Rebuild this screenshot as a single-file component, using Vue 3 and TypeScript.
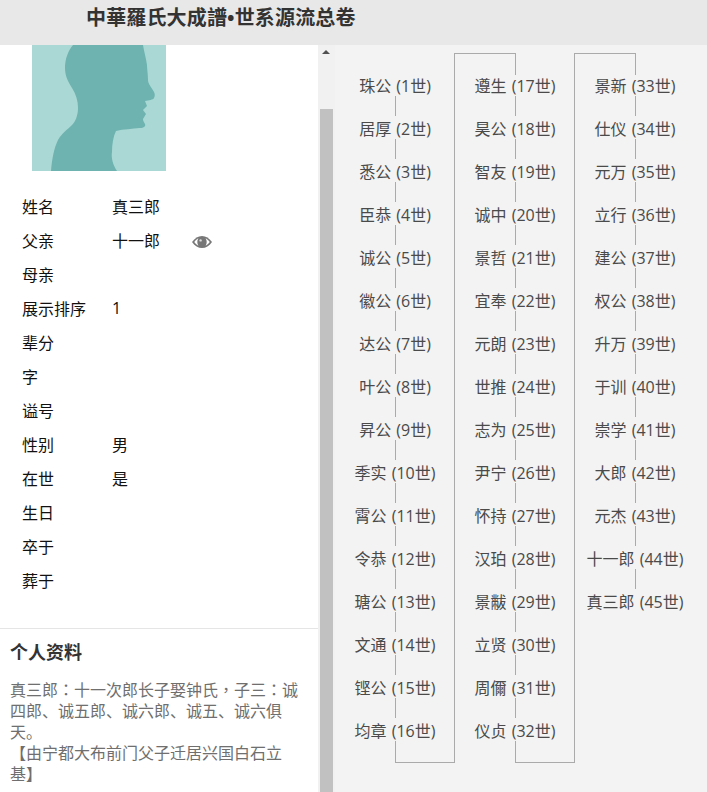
<script setup lang="ts">
interface Field { label: string; value?: string; eye?: boolean }

const fields: Field[] = [
  { label: '姓名', value: '真三郎' },
  { label: '父亲', value: '十一郎', eye: true },
  { label: '母亲' },
  { label: '展示排序', value: '1' },
  { label: '辈分' },
  { label: '字' },
  { label: '谥号' },
  { label: '性别', value: '男' },
  { label: '在世', value: '是' },
  { label: '生日' },
  { label: '卒于' },
  { label: '葬于' },
]

const names = [
  '珠公', '居厚', '悉公', '臣恭', '诚公', '徽公', '达公', '叶公', '昇公', '季实', '霄公', '令恭', '瑭公', '文通', '铿公', '均章',
  '遵生', '昊公', '智友', '诚中', '景哲', '宜奉', '元朗', '世推', '志为', '尹宁', '怀持', '汉珀', '景黻', '立贤', '周儞', '仪贞',
  '景新', '仕仪', '元万', '立行', '建公', '权公', '升万', '于训', '崇学', '大郎', '元杰', '十一郎', '真三郎',
]

const columns = [0, 16, 32].map((start, c) => ({
  index: c,
  items: names.slice(start, start + 16).map((name, i) => ({
    text: `${name} (${start + i + 1}世)`,
  })),
}))
</script>

<template>
  <div class="page">
    <header class="topbar">
      <h1 class="title">中華羅氏大成譜•世系源流总卷</h1>
    </header>
    <div class="body">
      <aside class="side">
        <div class="side-content">
          <svg class="avatar" viewBox="0 0 134 126" width="134" height="126">
            <rect width="134" height="126" fill="#aad9d5" />
            <path
              fill="#6fb3b0"
              d="M41 0C36 6 33 14 33 23C33 32 37 38 40 43C44 49 46 56 46 63C46 71 43 77 40 80C35 85 30 88 26 95C22 103 20 114 19 126H85C81 120 79 113 80 107C80 100 81 92 84 86C92 84 100 84 108 83C112 83 114 81 113 79C112 77 111 76 111 74L114 69L111 65L115 61L113 56C117 55 121 55 122 53C123 51 123 49 122 47C120 43 116 39 116 35C116 28 115 24 115 20C114 13 112 6 111 0Z"
            />
          </svg>
          <dl class="fields">
            <div v-for="f in fields" :key="f.label" class="field">
              <dt class="field-label">{{ f.label }}</dt>
              <dd class="field-value">{{ f.value }}</dd>
              <svg v-if="f.eye" class="eye" viewBox="0 0 20 12" width="20" height="12">
                <path fill="#777" d="M0 6C3 2 6 0 10 0C14 0 17 2 20 6C17 10 14 12 10 12C6 12 3 10 0 6Z" />
                <path fill="#fff" d="M2.2 6C4 3.9 5.4 2.8 6.4 2.3C5.7 3.3 5.3 4.6 5.3 6C5.3 7.4 5.7 8.7 6.4 9.7C5.4 9.2 4 8.1 2.2 6ZM13.6 2.3C14.6 2.8 16 3.9 17.8 6C16 8.1 14.6 9.2 13.6 9.7C14.3 8.7 14.7 7.4 14.7 6C14.7 4.6 14.3 3.3 13.6 2.3Z" />
                <circle cx="8.6" cy="4.4" r="1.2" fill="#ddd" />
              </svg>
            </div>
          </dl>
          <section class="bio">
            <h2 class="bio-title">个人资料</h2>
            <p class="bio-text">真三郎<span class="punct">：</span>十一次郎长子娶钟氏<span class="punct">，</span>子三<span class="punct">：</span>诚<br />四郎、诚五郎、诚六郎、诚五、诚六俱<br />天。<br />【由宁都大布前门父子迁居兴国白石立<br />基】</p>
          </section>
        </div>
        <div class="scrollbar">
          <div class="scroll-arrow"></div>
          <div class="scroll-thumb"></div>
        </div>
      </aside>
      <main class="tree">
        <div v-for="col in columns" :key="col.index" class="column" :class="{ linked: col.index > 0 }">
          <div class="lead"></div>
          <template v-for="(item, i) in col.items" :key="item.text">
            <div class="node">{{ item.text }}</div>
            <div v-if="i < col.items.length - 1" class="link"></div>
          </template>
          <div v-if="col.index < 2" class="tail"></div>
        </div>
      </main>
    </div>
  </div>
</template>

<style>
html, body { margin: 0; overflow: hidden; }
</style>

<style scoped>
.page {
  width: 707px;
  height: 792px;
  display: flex;
  flex-direction: column;
  overflow: hidden;
  font-family: "Open Sans", "Noto Sans CJK SC", sans-serif;
  background: #fff;
  text-spacing-trim: space-all;
}
.topbar {
  height: 45px;
  flex: none;
  background: #e8e8e8;
  padding-left: 86px;
  box-sizing: border-box;
}
.title {
  margin: 0;
  font-size: 20px;
  line-height: 36px;
  font-weight: 700;
  color: #333;
  letter-spacing: 0.15px;
  white-space: nowrap;
}
.body {
  flex: 1;
  display: flex;
  min-height: 0;
}
.side {
  width: 335px;
  flex: none;
  display: flex;
}
.side-content {
  width: 318px;
  flex: none;
}
.avatar {
  display: block;
  margin-left: 32px;
}
.fields {
  margin: 18px 0 0;
  padding-left: 22px;
}
.field {
  height: 34px;
  display: flex;
  align-items: center;
  font-size: 16px;
  color: #111;
}
.field-label { width: 90px; }
.field-value { margin: 0; width: 80px; }
.eye { margin-top: 4px; }
.bio {
  margin-top: 31px;
  border-top: 1px solid #e5e5e5;
  padding: 11px 10px 0;
  width: 298px;
}
.bio-title {
  margin: 0;
  font-size: 18px;
  line-height: 24px;
  font-weight: 700;
  color: #333;
}
.bio-text {
  margin: 15px 0 0;
  font-size: 16px;
  line-height: 21px;
  color: #6f6f6f;
  white-space: nowrap;
}
.punct {
  font-family: "Noto Sans CJK TC", sans-serif;
}
.scrollbar {
  width: 17px;
  flex: none;
  background: #f1f1f1;
  position: relative;
  padding: 64px 2px 0;
  box-sizing: border-box;
}
.scroll-arrow {
  position: absolute;
  top: 5px;
  left: 4px;
  width: 0;
  height: 0;
  border-left: 4px solid transparent;
  border-right: 4px solid transparent;
  border-bottom: 4px solid #505050;
}
.scroll-thumb {
  height: 100%;
  background: #c1c1c1;
}
.tree {
  flex: 1;
  background: #f3f3f3;
  display: flex;
  align-items: flex-start;
  padding-top: 8px;
}
.column {
  width: 119px;
  flex: none;
  display: flex;
  flex-direction: column;
  font-size: 16px;
  color: #4a4a4a;
  word-spacing: 1px;
}
.column.linked {
  width: 120px;
  height: 710px;
  box-sizing: border-box;
  border-left: 1px solid #aaa;
}
.lead {
  height: 22px;
  width: 61px;
  margin-bottom: -2px;
  box-sizing: border-box;
}
.linked .lead {
  border-top: 1px solid #aaa;
  border-right: 1px solid #aaa;
}
.node {
  height: 23px;
  line-height: 27px;
  width: 120px;
  text-align: center;
  white-space: nowrap;
}
.link {
  width: 61px;
  height: 20px;
  border-right: 1px solid #aaa;
  box-sizing: border-box;
}
.tail {
  width: 59px;
  height: 21px;
  margin-left: 60px;
  border-left: 1px solid #aaa;
  border-bottom: 1px solid #aaa;
}
</style>
